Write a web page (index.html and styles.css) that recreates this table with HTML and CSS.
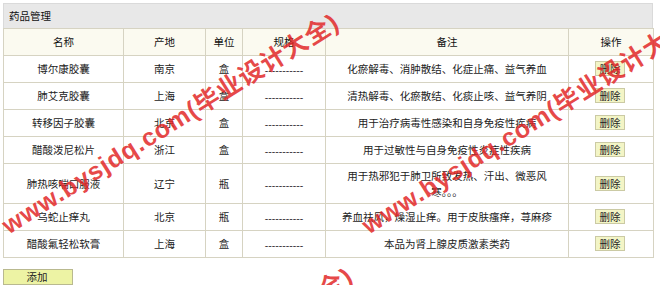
FILE: index.html
```html
<!DOCTYPE html>
<html lang="zh">
<head>
<meta charset="utf-8">
<title>药品管理</title>
<link rel="stylesheet" href="styles.css">
</head>
<body>
<div class="page">
  <div class="panel">
    <div class="panel-title">药品管理</div>
    <table class="grid">
      <colgroup>
        <col class="c-name"><col class="c-place"><col class="c-unit"><col class="c-spec"><col class="c-note"><col class="c-op">
      </colgroup>
      <thead>
        <tr><th>名称</th><th>产地</th><th>单位</th><th>规格</th><th>备注</th><th>操作</th></tr>
      </thead>
      <tbody>
        <tr><td>博尔康胶囊</td><td>南京</td><td>盒</td><td><span class="dash">-----------</span></td><td>化瘀解毒、消肿散结、化症止痛、益气养血</td><td><button class="btn-del">删除</button></td></tr>
        <tr><td>肺艾克胶囊</td><td>上海</td><td>盒</td><td><span class="dash">-----------</span></td><td>清热解毒、化瘀散结、化痰止咳、益气养阴</td><td><button class="btn-del">删除</button></td></tr>
        <tr><td>转移因子胶囊</td><td>北京</td><td>盒</td><td><span class="dash">-----------</span></td><td>用于治疗病毒性感染和自身免疫性疾病</td><td><button class="btn-del">删除</button></td></tr>
        <tr><td>醋酸泼尼松片</td><td>浙江</td><td>盒</td><td><span class="dash">-----------</span></td><td>用于过敏性与自身免疫性炎症性疾病</td><td><button class="btn-del">删除</button></td></tr>
        <tr class="tall"><td>肺热咳喘口服液</td><td>辽宁</td><td>瓶</td><td><span class="dash">-----------</span></td><td>用于热邪犯于肺卫所致发热、汗出、微恶风<br>寒。。。</td><td><button class="btn-del">删除</button></td></tr>
        <tr><td>乌蛇止痒丸</td><td>北京</td><td>瓶</td><td><span class="dash">-----------</span></td><td>养血祛风，燥湿止痒。用于皮肤瘙痒，荨麻疹</td><td><button class="btn-del">删除</button></td></tr>
        <tr><td>醋酸氟轻松软膏</td><td>上海</td><td>盒</td><td><span class="dash">-----------</span></td><td>本品为肾上腺皮质激素类药</td><td><button class="btn-del">删除</button></td></tr>
      </tbody>
    </table>
  </div>
  <div class="actions"><button class="btn-add">添加</button></div>
</div>
<div class="wm wm-a">www.bysjdq.com(毕业设计大全)</div>
<div class="wm wm-b">www.bysjdq.com(毕业设计大全)</div>
<div class="wm wm-c">www.bysjdq.com(毕业设计大全)</div>
</body>
</html>
```
FILE: styles.css
```css
html {
  overflow: hidden;
}
html, body {
  margin: 0;
  padding: 0;
  background: #ffffff;
}
body {
  font-family: "Noto Sans CJK SC", "Liberation Sans", sans-serif;
  font-size: 10.5px;
  color: #222;
  overflow: hidden;
  width: 660px;
  height: 285px;
  position: relative;
}
.page {
  padding: 3px 0 0 3px;
}
.panel {
  width: 650px;
}
.panel-title {
  height: 24px;
  line-height: 24px;
  padding-left: 5px;
  background: #e8e8e8;
  border: 1px solid #dadada;
  border-bottom: none;
  color: #111;
}
.grid {
  width: 650px;
  border-collapse: collapse;
  table-layout: fixed;
}
.c-name { width: 120px; }
.c-place { width: 82px; }
.c-unit { width: 37px; }
.c-spec { width: 83px; }
.c-note { width: 243px; }
.c-op { width: 85px; }
.grid th, .grid td {
  border: 1px solid #d6d3c2;
  height: 26px;
  padding: 0;
  text-align: center;
  vertical-align: middle;
  white-space: nowrap;
  font-weight: normal;
  line-height: 16px;
}
.grid th {
  background: #fbfaf0;
  color: #111;
}
.grid tr.tall td {
  height: 39px;
}
.dash {
  font-family: "Liberation Sans", sans-serif;
  font-size: 10.5px;
  vertical-align: -2px;
  color: #333;
}
.btn-del {
  font-family: "Noto Sans CJK SC", sans-serif;
  font-size: 10.5px;
  width: 30px;
  height: 15px;
  padding: 0;
  line-height: 13px;
  background: #f3f5c6;
  border: 1px solid #cbcaa4;
  color: #222;
  margin-right: 2px;
}
.actions {
  padding-top: 11px;
}
.btn-add {
  font-family: "Noto Sans CJK SC", sans-serif;
  font-size: 10.5px;
  width: 70px;
  height: 16px;
  padding: 0 2px 0 0;
  line-height: 14px;
  background: #edf3a4;
  border: 1px solid #b9b98f;
  color: #222;
}
.wm {
  position: absolute;
  font-family: "Liberation Sans", "Noto Sans CJK SC", sans-serif;
  font-weight: bold;
  font-size: 25px;
  line-height: 26px;
  color: rgba(226, 40, 40, 0.85);
  white-space: nowrap;
  transform-origin: 0 50%;
  transform: rotate(-32deg);
  pointer-events: none;
  letter-spacing: 1px;
}
.wm-a { left: 4px; top: 214px; }
.wm-b { left: 364px; top: 214px; }
.wm-c { left: 18px; top: 468px; }
```
